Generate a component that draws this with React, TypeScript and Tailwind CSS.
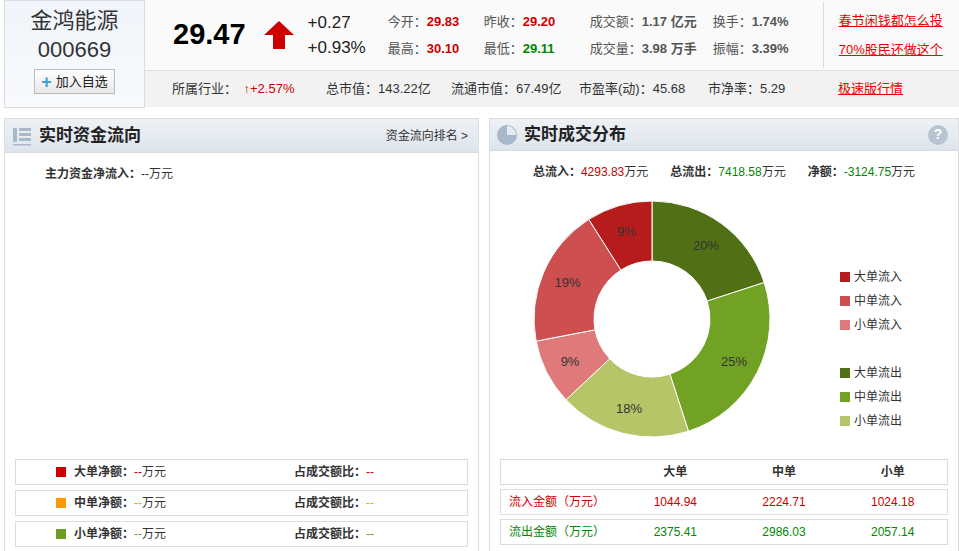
import React from 'react'

const font = { fontFamily: '"Liberation Sans", "Noto Sans CJK SC", sans-serif' }

// 环形图数据（顺时针，从 12 点开始）
const slices = [
  { pct: 20, color: '#4f7014' },
  { pct: 25, color: '#71a224' },
  { pct: 18, color: '#b6c567' },
  { pct: 9, color: '#e07a7a' },
  { pct: 19, color: '#cd4f4f' },
  { pct: 9, color: '#b71c1c' },
]

function Donut() {
  const cx = 150, cy = 150, R = 118, r = 58
  let acc = 0
  const pt = (a: number, rad: number) => [cx + rad * Math.sin(a), cy - rad * Math.cos(a)]
  return (
    <svg width="300" height="300" viewBox="0 0 300 300">
      {slices.map((s, i) => {
        const a0 = (acc / 100) * Math.PI * 2
        acc += s.pct
        const a1 = (acc / 100) * Math.PI * 2
        const large = a1 - a0 > Math.PI ? 1 : 0
        const [x0, y0] = pt(a0, R), [x1, y1] = pt(a1, R)
        const [x2, y2] = pt(a1, r), [x3, y3] = pt(a0, r)
        const mid = (a0 + a1) / 2
        const [tx, ty] = pt(mid, 92)
        return (
          <g key={i}>
            <path d={`M${x0},${y0} A${R},${R} 0 ${large} 1 ${x1},${y1} L${x2},${y2} A${r},${r} 0 ${large} 0 ${x3},${y3} Z`} fill={s.color} stroke="#fff" strokeWidth="1" />
            <text x={tx} y={ty + 5} textAnchor="middle" fontSize="13" fill="#333" style={font}>{s.pct}%</text>
          </g>
        )
      })}
    </svg>
  )
}

function PanelHead({ title, icon, right }: { title: string; icon: React.ReactNode; right: React.ReactNode }) {
  return (
    <div className="flex h-[34px] items-center justify-between border-b border-[#d5dce4] bg-gradient-to-b from-[#eef2f6] to-[#dde4ec] pl-[6px] pr-[10px]">
      <div className="flex items-center gap-[6px]">
        {icon}
        <span className="text-[17px] font-bold text-[#222]">{title}</span>
      </div>
      {right}
    </div>
  )
}

function NetRow({ color, label, c }: { color: string; label: string; c: string }) {
  return (
    <div className="flex h-[26px] items-center border border-[#dcdcdc] text-[12px] text-[#333]">
      <span className="ml-[40px] mr-[8px] h-[10px] w-[10px]" style={{ background: color }} />
      <span className="w-[220px]"><b>{label}：</b><span style={{ color: c }}>--</span>万元</span>
      <span><b>占成交额比：</b><span style={{ color: c }}>--</span></span>
    </div>
  )
}

export default function App() {
  return (
    <div className="h-[551px] w-[959px] overflow-hidden bg-white text-[12px]" style={font}>
      {/* 顶部行情 */}
      <div className="flex h-[108px] pl-[4px]">
        <div className="flex w-[141px] flex-col items-center border border-[#ddd] bg-gradient-to-b from-[#f0f5fb] to-[#f8fafd] pt-[5px]">
          <div className="text-[22px] leading-[30px] text-[#333]">金鸿能源</div>
          <div className="text-[22px] leading-[28px] text-[#333]">000669</div>
          <div className="mt-[5px] flex h-[25px] items-center gap-[4px] border border-[#bbb] bg-gradient-to-b from-white to-[#e8e8e8] px-[6px] text-[13px] text-[#222]">
            <span className="text-[18px] font-bold leading-none text-[#3ea0e0]">+</span>加入自选
          </div>
        </div>
        <div className="flex flex-1 flex-col">
          <div className="flex h-[71px] border-b border-[#e0e0e0] bg-[#fafafa]">
            <div className="flex items-center pl-[28px]">
              <span className="text-[29px] font-bold text-black">29.47</span>
              <svg width="30" height="28" viewBox="0 0 30 28" className="ml-[18px]"><path d="M15 0 L30 14 L21 14 L21 28 L9 28 L9 14 L0 14 Z" fill="#c00" /></svg>
              <div className="ml-[14px] text-[17px] leading-[25px] text-[#222]"><div>+0.27</div><div>+0.93%</div></div>
            </div>
            <div className="ml-[22px] grid grid-cols-[96px_106px_123px_96px] content-center gap-y-[8px] text-[13px] text-[#555]">
              <span>今开：<b className="text-[#c00]">29.83</b></span>
              <span>昨收：<b className="text-[#c00]">29.20</b></span>
              <span>成交额：<b className="text-[#555]">1.17 亿元</b></span>
              <span>换手：<b>1.74%</b></span>
              <span>最高：<b className="text-[#c00]">30.10</b></span>
              <span>最低：<b className="text-[#080]">29.11</b></span>
              <span>成交量：<b>3.98 万手</b></span>
              <span>振幅：<b>3.39%</b></span>
            </div>
            <div className="my-[2px] ml-[14px] flex flex-col justify-center gap-[10px] border-l border-[#ddd] pl-[15px] text-[13px] text-[#e00] underline">
              <span>春节闲钱都怎么投</span><span>70%股民还做这个</span>
            </div>
          </div>
          <div className="flex h-[36px] items-center bg-[#f2f2f2] pl-[27px] text-[13px] text-[#333]">
            <span className="w-[154px]">所属行业：　<span className="text-[#c00]">↑+2.57%</span></span>
            <span className="w-[125px]">总市值：143.22亿</span>
            <span className="w-[128px]">流通市值：67.49亿</span>
            <span className="w-[129px]">市盈率(动)：45.68</span>
            <span className="w-[130px]">市净率：5.29</span>
            <span className="text-[#e00] underline">极速版行情</span>
          </div>
        </div>
      </div>

      <div className="mt-[10px] flex gap-[10px] pl-[4px]">
        {/* 资金流向 */}
        <div className="flex h-[440px] w-[475px] flex-col border border-[#ddd]">
          <PanelHead
            title="实时资金流向"
            icon={<svg width="22" height="22" viewBox="0 0 22 22" fill="#a9b8c8"><rect x="2" y="3" width="4" height="14" /><rect x="8" y="3" width="12" height="3" /><rect x="8" y="8" width="12" height="3" /><rect x="8" y="13" width="12" height="3" /><rect x="2" y="19" width="18" height="1.5" /></svg>}
            right={<span className="text-[12px] text-[#333]">资金流向排名 &gt;</span>}
          />
          <div className="pl-[40px] pt-[12px] text-[12px] text-[#333]"><b>主力资金净流入：</b>--万元</div>
          <div className="mt-auto flex flex-col gap-[5px] px-[10px] pb-[10px]">
            <NetRow color="#c00" label="大单净额" c="#c00" />
            <NetRow color="#f90" label="中单净额" c="#f90" />
            <NetRow color="#6a9e22" label="小单净额" c="#6a9e22" />
          </div>
        </div>
        {/* 成交分布 */}
        <div className="flex h-[440px] flex-1 flex-col border border-[#ddd]">
          <PanelHead
            title="实时成交分布"
            icon={<svg width="22" height="22" viewBox="0 0 22 22"><circle cx="11" cy="11" r="10" fill="#a9b8c8" /><path d="M11 11 L11 2 A9 9 0 0 1 20 11 Z" fill="#e6ecf2" /></svg>}
            right={<span className="flex h-[20px] w-[20px] items-center justify-center rounded-full bg-[#b7c4d2] text-[14px] font-bold text-white">?</span>}
          />
          <div className="flex justify-center gap-[22px] pt-[12px] text-[12px] text-[#333]">
            <span><b>总流入：</b><span className="text-[#c00]">4293.83</span>万元</span>
            <span><b>总流出：</b><span className="text-[#080]">7418.58</span>万元</span>
            <span><b>净额：</b><span className="text-[#080]">-3124.75</span>万元</span>
          </div>
          <div className="flex">
            <div className="ml-[12px] mt-[-12px] h-[290px]"><Donut /></div>
            <div className="ml-[38px] mt-[88px] flex flex-col gap-[8px] text-[12px] text-[#333]">
              {[['#b71c1c', '大单流入'], ['#cd4f4f', '中单流入'], ['#e07a7a', '小单流入'], ['', ''], ['#4f7014', '大单流出'], ['#71a224', '中单流出'], ['#b6c567', '小单流出']].map(([c, t], i) => (
                <div key={i} className="flex h-[16px] items-center gap-[4px]">
                  {c && <span className="h-[10px] w-[10px]" style={{ background: c }} />}{t}
                </div>
              ))}
            </div>
          </div>
          <div className="mt-auto flex flex-col gap-[4px] px-[10px] pb-[12px] text-[12px]">
            <div className="grid h-[26px] grid-cols-[120px_1fr_1fr_1fr] items-center border border-[#dcdcdc] text-center font-bold text-[#333]"><span /><span>大单</span><span>中单</span><span>小单</span></div>
            <div className="grid h-[26px] grid-cols-[120px_1fr_1fr_1fr] items-center border border-[#dcdcdc] text-center text-[#c00]"><span className="pl-[8px] text-left">流入金额（万元）</span><span>1044.94</span><span>2224.71</span><span>1024.18</span></div>
            <div className="grid h-[26px] grid-cols-[120px_1fr_1fr_1fr] items-center border border-[#dcdcdc] text-center text-[#080]"><span className="pl-[8px] text-left">流出金额（万元）</span><span>2375.41</span><span>2986.03</span><span>2057.14</span></div>
          </div>
        </div>
      </div>
    </div>
  )
}
